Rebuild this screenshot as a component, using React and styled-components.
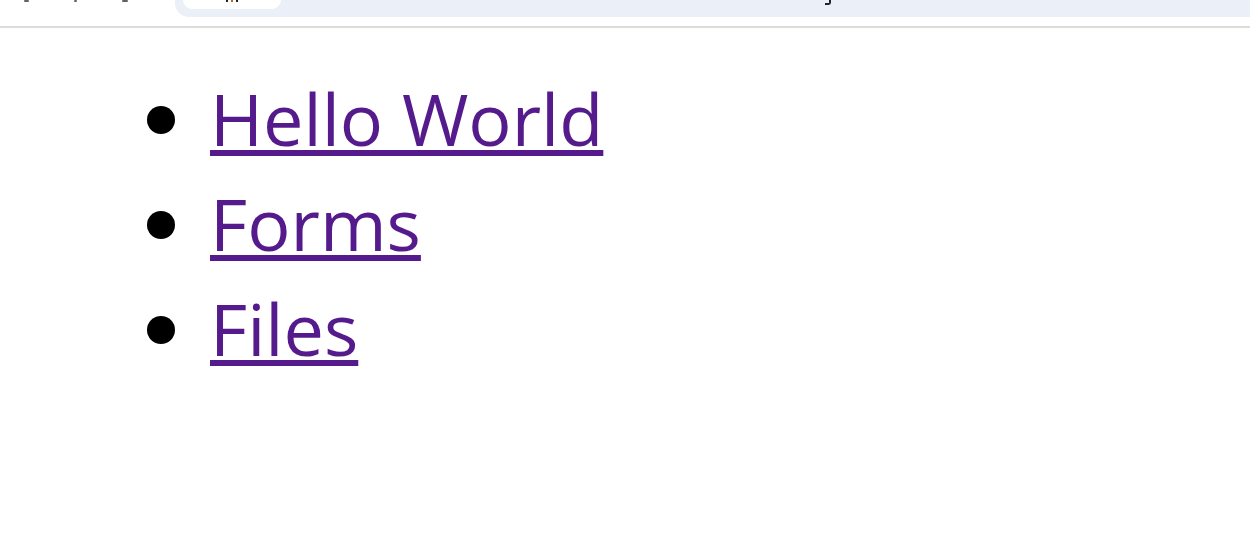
import React from "react";
import styled, { createGlobalStyle } from "styled-components";

const Global = createGlobalStyle`
  html, body { margin: 0; padding: 0; background: #fff; }
  body { font-family: "Open Sans", "Noto Sans", sans-serif; }
`;

const Chrome = styled.header`
  height: 26px;
  display: flex;
  align-items: flex-start;
  border-bottom: 2px solid #dcdcdc;
  background: #fff;
`;

const NavIcons = styled.div`
  width: 175px;
  display: flex;
  gap: 45px;
  padding-left: 24px;
  box-sizing: border-box;
`;

const IconStub = styled.span`
  width: ${(p) => p.$w || 4}px;
  height: 2px;
  background: #5f6368;
  border-radius: 1px;
`;

const Omnibox = styled.div`
  flex: 1;
  height: 17px;
  background: #ebf0f8;
  border-bottom-left-radius: 14px;
  display: flex;
  align-items: flex-start;
  padding-left: 8px;
  position: relative;
`;

const Chip = styled.div`
  width: 98px;
  height: 9px;
  background: #fff;
  border-bottom-left-radius: 10px;
  border-bottom-right-radius: 10px;
  display: flex;
  justify-content: center;
  gap: 3px;
`;

const Glyph = styled.span`
  width: 2px;
  height: 2px;
  background: ${(p) => p.$c || "#222"};
`;

const Tail = styled.span`
  position: absolute;
  left: 650px;
  top: 0;
  width: 4px;
  height: 3px;
  border-bottom: 2px solid #222;
  border-right: 2px solid #222;
  border-bottom-right-radius: 3px;
`;

const List = styled.ul`
  list-style: none;
  margin: 0;
  padding: 38px 0 0 147px;
`;

const Item = styled.li`
  display: flex;
  align-items: center;
  gap: 35px;
  height: 105px;
`;

const Bullet = styled.span`
  width: 28px;
  height: 28px;
  border-radius: 50%;
  background: #000;
  flex: none;
  margin-top: 2px;
`;

const Link = styled.a`
  color: #551a8b;
  font-size: 72px;
  line-height: 105px;
  text-decoration: underline;
  text-decoration-thickness: 6px;
  text-underline-offset: 4px;
`;

const items = ["Hello World", "Forms", "Files"];

export default function App() {
  return (
    <>
      <Global />
      <Chrome>
        <NavIcons>
          <IconStub $w={5} />
          <IconStub $w={3} />
          <IconStub $w={6} />
        </NavIcons>
        <Omnibox>
          <Chip>
            <Glyph />
            <Glyph $c="#c06020" />
            <Glyph />
          </Chip>
          <Tail />
        </Omnibox>
      </Chrome>
      <List>
        {items.map((t) => (
          <Item key={t}>
            <Bullet />
            <Link href="#">{t}</Link>
          </Item>
        ))}
      </List>
    </>
  );
}
